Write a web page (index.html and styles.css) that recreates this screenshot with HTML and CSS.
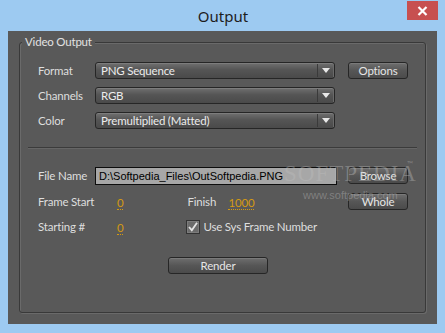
FILE: index.html
```html
<!DOCTYPE html>
<html>
<head>
<meta charset="utf-8">
<link rel="stylesheet" href="styles.css">
</head>
<body>
<div class="window">
  <div class="titlebar">
    <span class="title">Output</span>
    <div class="close">
      <svg width="11" height="10" viewBox="0 0 11 10"><path d="M1.5 1 L9.5 9 M9.5 1 L1.5 9" stroke="#fff" stroke-width="2.2" fill="none"/></svg>
    </div>
  </div>
  <div class="client">
    <div class="group">
      <span class="legend">Video Output</span>
      <div class="row">
        <span class="label">Format</span>
        <div class="combo"><span class="combo-text">PNG Sequence</span><span class="combo-btn"><span class="arrow"></span></span></div>
        <div class="btn side">Options</div>
      </div>
      <div class="row">
        <span class="label">Channels</span>
        <div class="combo"><span class="combo-text">RGB</span><span class="combo-btn"><span class="arrow"></span></span></div>
      </div>
      <div class="row">
        <span class="label">Color</span>
        <div class="combo"><span class="combo-text">Premultiplied (Matted)</span><span class="combo-btn"><span class="arrow"></span></span></div>
      </div>
      <div class="sep"></div>
      <div class="row">
        <span class="label">File Name</span>
        <div class="input">D:\Softpedia_Files\OutSoftpedia.PNG</div>
        <div class="btn side">Browse</div>
      </div>
      <div class="row row-frame">
        <span class="label">Frame Start</span>
        <div class="mid">
          <span class="num num-start">0</span>
          <span class="finish">Finish</span>
          <span class="num">1000</span>
        </div>
        <div class="btn side">Whole</div>
      </div>
      <div class="row row-start">
        <span class="label">Starting #</span>
        <div class="mid">
          <span class="num num-start">0</span>
          <span class="check">
            <svg width="14" height="14" viewBox="0 0 14 14"><rect x="0.5" y="0.5" width="13" height="13" fill="#6b6b6b" stroke="#333"/><rect x="1.5" y="1.5" width="11" height="11" fill="none" stroke="#7c7c7c"/><path d="M3 7 L5.8 10.2 L11 2.8" stroke="#e4e4e4" stroke-width="1.8" fill="none"/></svg>
          </span>
          <span class="check-label">Use Sys Frame Number</span>
        </div>
      </div>
      <div class="render-row">
        <div class="btn render">Render</div>
      </div>
      <div class="watermark">
        <span class="wm-big">SOFTPEDIA</span><span class="wm-tm">™</span>
        <span class="wm-url">www.softpedia.com</span>
      </div>
    </div>
  </div>
</div>
</body>
</html>
```
FILE: styles.css
```css
html, body {
  margin: 0;
  padding: 0;
}
body {
  width: 445px;
  height: 333px;
  background: #9dcaf1;
  font-family: Lato, "Noto Sans", sans-serif;
  font-size: 11.5px;
  letter-spacing: -0.2px;
  overflow: hidden;
}
.window {
  display: flex;
  flex-direction: column;
  height: 333px;
}
.titlebar {
  height: 31px;
  position: relative;
  display: flex;
  align-items: center;
  justify-content: center;
}
.title {
  font-family: "Noto Sans", sans-serif;
  font-size: 15px;
  letter-spacing: 0;
  color: #1d1d1d;
  margin-top: 1px;
  margin-left: 1px;
}
.close {
  position: absolute;
  top: 1px;
  right: 7px;
  width: 31px;
  height: 19px;
  background: #c75050;
  display: flex;
  align-items: center;
  justify-content: center;
}
.client {
  margin: 0 8px;
  height: 293px;
  background: #595959;
  padding: 11px;
  box-sizing: border-box;
}
.group {
  position: relative;
  height: 271px;
  box-sizing: border-box;
  border: 1px solid #393939;
  box-shadow: 1px 1px 0 #6a6a6a, inset 1px 1px 0 #6a6a6a;
  border-radius: 3px;
  padding: 19px 0 0 18px;
  display: flex;
  flex-direction: column;
  color: #dedede;
}
.legend {
  position: absolute;
  top: -9px;
  left: 2px;
  padding: 0 3px;
  background: #595959;
  color: #e2e2e2;
  line-height: 16px;
}
.row {
  display: flex;
  align-items: center;
  height: 17px;
  margin-bottom: 8px;
}
.label {
  width: 57px;
  flex: none;
  white-space: nowrap;
}
.combo {
  width: 240px;
  flex: none;
  height: 17px;
  box-sizing: border-box;
  border: 1px solid #262626;
  border-radius: 3px;
  background: linear-gradient(#707070, #555 45%, #4a4a4a);
  box-shadow: inset 0 1px 0 #7d7d7d;
  display: flex;
  align-items: center;
  color: #ececec;
}
.combo-text {
  flex: 1;
  padding-left: 5px;
  line-height: 15px;
}
.combo-btn {
  width: 16px;
  height: 13px;
  border-left: 1px solid #3a3a3a;
  box-shadow: -1px 0 0 #6a6a6a inset;
  display: flex;
  align-items: center;
  justify-content: center;
}
.arrow {
  width: 0;
  height: 0;
  border-left: 4px solid transparent;
  border-right: 4px solid transparent;
  border-top: 5px solid #e8e8e8;
  margin-right: 1px;
}
.btn {
  height: 17px;
  flex: none;
  box-sizing: border-box;
  border: 1px solid #262626;
  border-radius: 3px;
  background: linear-gradient(#6e6e6e, #565656 50%, #4b4b4b);
  box-shadow: inset 0 1px 0 #7a7a7a;
  color: #e6e6e6;
  display: flex;
  align-items: center;
  justify-content: center;
  line-height: 15px;
}
.side {
  width: 60px;
  margin-left: 13px;
}
.sep {
  height: 1px;
  background: #3b3b3b;
  box-shadow: 0 1px 0 #666;
  margin: 10px 8px 19px -10px;
}
.input {
  width: 242px;
  flex: none;
  height: 18px;
  box-sizing: border-box;
  border: 1px solid #0d0d0d;
  background: #a7a7a7;
  color: #000;
  font-family: "Liberation Sans", Arial, sans-serif;
  font-size: 11px;
  letter-spacing: 0;
  padding-left: 3px;
  line-height: 16px;
  white-space: nowrap;
  overflow: hidden;
}
.input + .side {
  margin-left: 11px;
}
.row-frame {
  margin-top: 1px;
}
.mid {
  width: 240px;
  flex: none;
  display: flex;
  align-items: center;
  white-space: nowrap;
}
.num {
  color: #d49a12;
  border-bottom: 1px dotted #d49a12;
  line-height: 13px;
  margin-top: 2px;
}
.num-start {
  margin-left: 22px;
}
.finish {
  margin-left: 64px;
  width: 41px;
}
.row-start .check {
  margin-left: 63px;
  display: flex;
}
.check-label {
  margin-left: 3px;
}
.render-row {
  margin-top: 14px;
  padding-left: 130px;
  display: flex;
}
.render {
  width: 100px;
}
.watermark {
  position: absolute;
  left: 264px;
  top: 118px;
  width: 140px;
  height: 45px;
  pointer-events: none;
  color: rgba(190, 190, 190, 0.4);
  letter-spacing: 0;
}
.wm-big {
  position: absolute;
  left: 0;
  top: 0;
  font-family: "Liberation Serif", serif;
  font-size: 23px;
  letter-spacing: 1px;
  line-height: 26px;
}
.wm-tm {
  position: absolute;
  left: 123px;
  top: -2px;
  font-size: 8px;
}
.wm-url {
  position: absolute;
  left: 19px;
  top: 28px;
  font-family: "Liberation Sans", sans-serif;
  font-size: 11px;
}
```
